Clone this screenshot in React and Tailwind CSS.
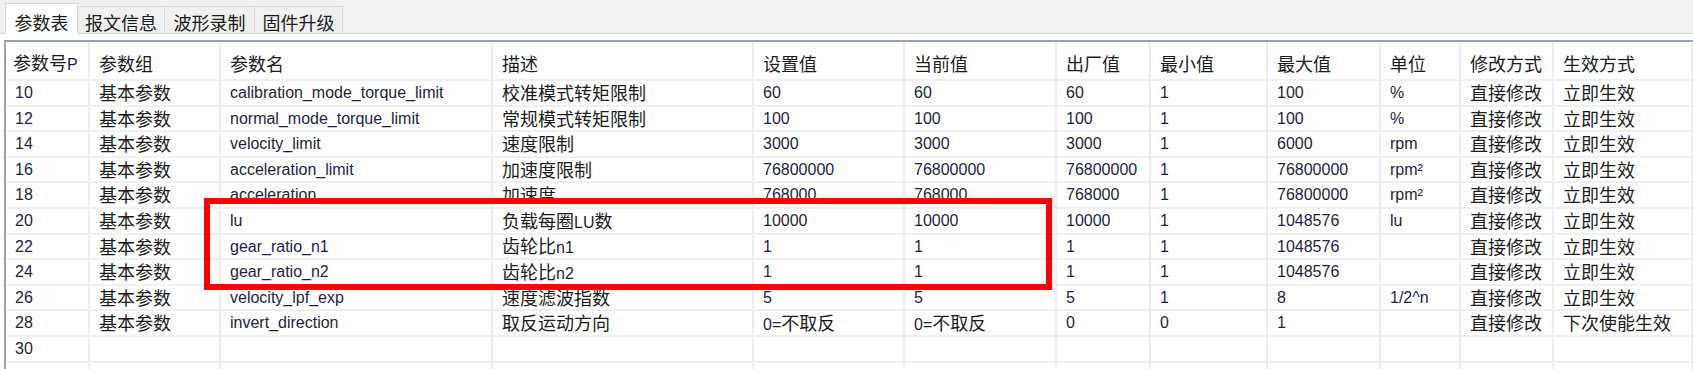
import React from "react";

const GRID =
  "grid grid-cols-[84px_131px_272px_261px_151px_152px_94px_117px_113px_80px_93px_minmax(0,1fr)]";

const headers = ["参数号P", "参数组", "参数名", "描述", "设置值", "当前值", "出厂值", "最小值", "最大值", "单位", "修改方式", "生效方式"];

const rows = [
  ["10", "基本参数", "calibration_mode_torque_limit", "校准模式转矩限制", "60", "60", "60", "1", "100", "%", "直接修改", "立即生效"],
  ["12", "基本参数", "normal_mode_torque_limit", "常规模式转矩限制", "100", "100", "100", "1", "100", "%", "直接修改", "立即生效"],
  ["14", "基本参数", "velocity_limit", "速度限制", "3000", "3000", "3000", "1", "6000", "rpm", "直接修改", "立即生效"],
  ["16", "基本参数", "acceleration_limit", "加速度限制", "76800000", "76800000", "76800000", "1", "76800000", "rpm²", "直接修改", "立即生效"],
  ["18", "基本参数", "acceleration", "加速度", "768000", "768000", "768000", "1", "76800000", "rpm²", "直接修改", "立即生效"],
  ["20", "基本参数", "lu", "负载每圈LU数", "10000", "10000", "10000", "1", "1048576", "lu", "直接修改", "立即生效"],
  ["22", "基本参数", "gear_ratio_n1", "齿轮比n1", "1", "1", "1", "1", "1048576", "", "直接修改", "立即生效"],
  ["24", "基本参数", "gear_ratio_n2", "齿轮比n2", "1", "1", "1", "1", "1048576", "", "直接修改", "立即生效"],
  ["26", "基本参数", "velocity_lpf_exp", "速度滤波指数", "5", "5", "5", "1", "8", "1/2^n", "直接修改", "立即生效"],
  ["28", "基本参数", "invert_direction", "取反运动方向", "0=不取反", "0=不取反", "0", "0", "1", "", "直接修改", "下次使能生效"],
  ["30", "", "", "", "", "", "", "", "", "", "", ""],
  ["", "", "", "", "", "", "", "", "", "", "", ""],
];

function Txt({ s }) {
  const parts = s.split(/([\u3000-\u9fff\uff00-\uffef]+)/).filter((p) => p !== "");
  return (
    <span className="whitespace-nowrap leading-[1.15]">
      {parts.map((p, i) =>
        /[\u3000-\u9fff\uff00-\uffef]/.test(p) ? (
          <span key={i} className="font-['Noto_Sans_CJK_SC',sans-serif] text-[18px] text-[#1c1c1c]">
            {p}
          </span>
        ) : (
          <span key={i} className="font-['Liberation_Sans',Arial,sans-serif] text-[16px] text-[#1d1f45]">
            {p}
          </span>
        )
      )}
    </span>
  );
}

function Tab({ label, active, w }) {
  if (active) {
    return (
      <div
        className={`${w} h-[31px] -mb-px relative z-10 bg-white border border-b-0 border-[#d9d9d9] flex items-center justify-center pt-[7px]`}
      >
        <Txt s={label} />
      </div>
    );
  }
  return (
    <div
      className={`${w} h-[27px] bg-[#f0f0f0] border-t border-r border-[#d9d9d9] flex items-center justify-center pt-[5px]`}
    >
      <Txt s={label} />
    </div>
  );
}

export default function App() {
  return (
    <div className="w-[1693px] h-[369px] overflow-hidden bg-white relative">
      <div className="h-[33px] bg-[#f0f0f0] flex items-end pl-[5px]">
        <Tab label="参数表" active w="w-[73px]" />
        <Tab label="报文信息" w="w-[87px]" />
        <Tab label="波形录制" w="w-[90px]" />
        <Tab label="固件升级" w="w-[88px]" />
      </div>
      <div className="border-t border-[#d9d9d9] pt-[6px] pl-[4px] bg-white">
        <div className="border-t-2 border-l-2 border-t-[#9ca3b0] border-l-[#a0a0a0]">
          <div className={`${GRID} h-[39px] border-b-2 border-[#f0f0f0]`}>
            {headers.map((h, i) => (
              <div
                key={i}
                className={`flex items-center pt-[6px] border-r-2 border-[#ececec] ${i === 0 ? "pl-[7px]" : "pl-[9px]"}`}
              >
                <Txt s={h} />
              </div>
            ))}
          </div>
          {rows.map((r, ri) => (
            <div key={ri} className={`${GRID} h-[25.6px] border-b-2 border-[#f0f0f0]`}>
              {r.map((c, ci) => (
                <div key={ci} className="flex items-center border-r-2 border-[#ededed] pl-[9px]">
                  <Txt s={c} />
                </div>
              ))}
            </div>
          ))}
        </div>
      </div>
      <div className="absolute left-[204px] top-[198px] w-[848px] h-[92px] border-[6px] border-[#ff0000] pointer-events-none" />
    </div>
  );
}
